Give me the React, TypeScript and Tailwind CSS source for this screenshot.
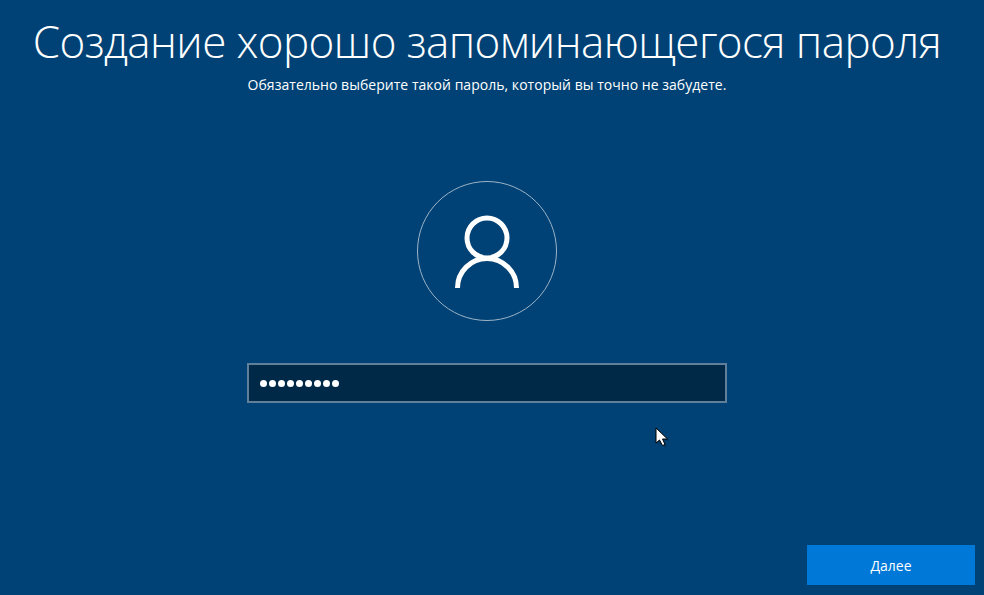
import React from 'react';

function UserIcon() {
  return (
    <svg width="70" height="80" viewBox="0 0 70 80" fill="none" stroke="#ffffff" strokeWidth="5">
      <circle cx="35" cy="27" r="20" />
      <path d="M5.5 77 A29.5 29.5 0 0 1 64.5 77" />
    </svg>
  );
}

function Cursor() {
  return (
    <svg className="absolute left-[655px] top-[427px]" width="17" height="23" viewBox="0 0 17 23">
      <path d="M3 3 L3 18 L6.5 15 L9.5 20.5 L12 19.5 L9.5 14 L14.5 14 Z" fill="#002a4d" opacity="0.45" />
      <path d="M1 1 L1 16 L4.5 13 L7.5 18.5 L10 17.5 L7.5 12 L12.5 12 Z" fill="#ffffff" stroke="#000000" strokeWidth="1" />
    </svg>
  );
}

export default function App() {
  return (
    <div className="relative flex h-[595px] w-[984px] flex-col overflow-hidden bg-[#004275] font-['Open_Sans','Noto_Sans',sans-serif] text-white">
      <div className="flex w-[974px] flex-col items-center">
        <h1 className="mt-[10px] whitespace-nowrap text-[44px] font-light leading-[62px] tracking-[-0.6px]">
          Создание хорошо запоминающегося пароля
        </h1>
        <p className="mt-[3px] text-sm leading-[20px] tracking-[0.03px]">
          Обязательно выберите такой пароль, который вы точно не забудете.
        </p>
        <div className="mt-[86px] flex h-[140px] w-[140px] items-center justify-center rounded-full border border-[#9db4c8]">
          <UserIcon />
        </div>
        <div className="mt-[42px] flex h-10 w-[480px] items-center gap-[2px] border-2 border-[#607f9a] bg-[#002847] pl-[11px]">
          {[0, 1, 2, 3, 4, 5, 6, 7, 8].map((i) => (
            <span key={i} className="h-[7px] w-[7px] rounded-full bg-white" />
          ))}
        </div>
      </div>
      <div className="mt-auto flex w-full justify-end pb-[10px] pr-[9px]">
        <button className="h-10 w-[168px] bg-[#0078d7] pt-px text-sm text-white">Далее</button>
      </div>
      <Cursor />
    </div>
  );
}
